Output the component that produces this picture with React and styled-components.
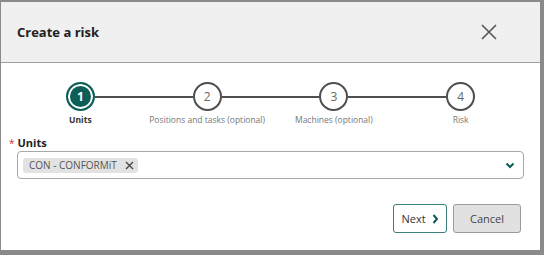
import React from "react";
import styled, { createGlobalStyle, css } from "styled-components";

const Global = createGlobalStyle`
  html, body { margin: 0; padding: 0; }
  body {
    background: #8a8a8a;
    font-family: "Open Sans", "Noto Sans", Arial, sans-serif;
    width: 544px;
    height: 255px;
    overflow: hidden;
  }
  * { box-sizing: border-box; }
`;

const TEAL = "#0c5e57";

const Dialog = styled.div`
  margin: 2px 0 0 1px;
  width: 539px;
  height: 248px;
  background: #fff;
  display: flex;
  flex-direction: column;
`;

const Header = styled.header`
  height: 61px;
  flex: none;
  background: #f0f0f0;
  border-bottom: 1px solid #9e9e9e;
  display: flex;
  align-items: center;
  justify-content: space-between;
  padding: 0 43px 0 16px;
`;

const Title = styled.h1`
  margin: 0;
  font-size: 13px;
  font-weight: 700;
  color: #222;
`;

const CloseButton = styled.button`
  border: 0;
  background: none;
  padding: 0;
  width: 16px;
  height: 16px;
  display: flex;
  align-items: center;
  justify-content: center;
  cursor: pointer;
`;

const Body = styled.div`
  flex: 1;
  padding: 19px 16px 17px 16px;
  display: flex;
  flex-direction: column;
`;

const Stepper = styled.ol`
  list-style: none;
  margin: 0;
  padding: 0;
  display: grid;
  grid-template-columns: repeat(4, 1fr);
`;

const Step = styled.li`
  display: flex;
  flex-direction: column;
  align-items: center;
`;

const CircleRow = styled.div`
  width: 100%;
  display: flex;
  align-items: center;
`;

const Line = styled.span`
  flex: 1;
  height: 2px;
  background: ${(p) => (p.$hidden ? "transparent" : "#4f4f4f")};
`;

const Circle = styled.span`
  flex: none;
  width: 29px;
  height: 29px;
  border-radius: 50%;
  border: 2px solid #4f4f4f;
  background: #fff;
  color: #666;
  font-size: 12px;
  display: flex;
  align-items: center;
  justify-content: center;
  ${(p) =>
    p.$active &&
    css`
      border-color: ${TEAL};
      background: ${TEAL};
      box-shadow: inset 0 0 0 2px #fff;
      color: #fff;
      font-weight: 700;
    `}
`;

const StepLabel = styled.span`
  margin-top: 3px;
  font-size: 8.5px;
  color: ${(p) => (p.$active ? "#333" : "#777")};
  font-weight: ${(p) => (p.$active ? 700 : 400)};
  white-space: nowrap;
`;

const Field = styled.div`
  margin-top: 10px;
  display: flex;
  flex-direction: column;
`;

const FieldLabel = styled.label`
  margin-left: -8px;
  font-size: 11px;
  font-weight: 700;
  color: #222;
  display: flex;
  align-items: baseline;
  gap: 3px;
`;

const Required = styled.span`
  color: #d0312d;
  font-weight: 400;
  font-size: 10px;
`;

const Select = styled.div`
  margin-top: 1px;
  height: 28px;
  border: 1px solid #a8a8a8;
  border-radius: 4px;
  display: flex;
  align-items: center;
  padding: 0 8px 0 5px;
`;

const Chip = styled.span`
  height: 15px;
  display: flex;
  align-items: center;
  gap: 8px;
  padding: 0 4px 0 6px;
  background: #e2e2e2;
  border-radius: 3px;
  font-size: 10px;
  color: #555;
`;

const ChipRemove = styled.span`
  display: flex;
  align-items: center;
`;

const Spacer = styled.span`
  flex: 1;
`;

const Actions = styled.div`
  margin-top: auto;
  display: flex;
  justify-content: flex-end;
  gap: 6px;
  padding-right: 3px;
`;

const Button = styled.button`
  height: 29px;
  border-radius: 3px;
  font-family: inherit;
  font-size: 11px;
  display: flex;
  align-items: center;
  justify-content: center;
  gap: 6px;
  cursor: pointer;
  ${(p) =>
    p.$primary
      ? css`
          width: 54px;
          background: #fff;
          border: 1px solid #3b8079;
          color: #333;
        `
      : css`
          width: 68px;
          background: #e1e1e1;
          border: 1px solid #9a9a9a;
          color: #444;
        `}
`;

const steps = [
  { n: 1, label: "Units" },
  { n: 2, label: "Positions and tasks (optional)" },
  { n: 3, label: "Machines (optional)" },
  { n: 4, label: "Risk" },
];

export default function App() {
  return (
    <>
      <Global />
      <Dialog>
        <Header>
          <Title>Create a risk</Title>
          <CloseButton aria-label="Close">
            <svg width="16" height="16" viewBox="0 0 16 16">
              <path d="M1 1L15 15M15 1L1 15" stroke="#555" strokeWidth="1.6" />
            </svg>
          </CloseButton>
        </Header>
        <Body>
          <Stepper>
            {steps.map((s, i) => (
              <Step key={s.n}>
                <CircleRow>
                  <Line $hidden={i === 0} />
                  <Circle $active={i === 0}>{s.n}</Circle>
                  <Line $hidden={i === steps.length - 1} />
                </CircleRow>
                <StepLabel $active={i === 0}>{s.label}</StepLabel>
              </Step>
            ))}
          </Stepper>
          <Field>
            <FieldLabel>
              <Required>*</Required>
              Units
            </FieldLabel>
            <Select>
              <Chip>
                CON - CONFORMiT
                <ChipRemove>
                  <svg width="9" height="9" viewBox="0 0 9 9">
                    <path d="M1 1L8 8M8 1L1 8" stroke="#444" strokeWidth="1.3" />
                  </svg>
                </ChipRemove>
              </Chip>
              <Spacer />
              <svg width="10" height="7" viewBox="0 0 10 7">
                <path d="M1.5 1.5L5 5L8.5 1.5" fill="none" stroke={TEAL} strokeWidth="2" />
              </svg>
            </Select>
          </Field>
          <Actions>
            <Button $primary>
              Next
              <svg width="7" height="10" viewBox="0 0 7 10">
                <path d="M1.5 1L5 5L1.5 9" fill="none" stroke={TEAL} strokeWidth="2" />
              </svg>
            </Button>
            <Button>Cancel</Button>
          </Actions>
        </Body>
      </Dialog>
    </>
  );
}
